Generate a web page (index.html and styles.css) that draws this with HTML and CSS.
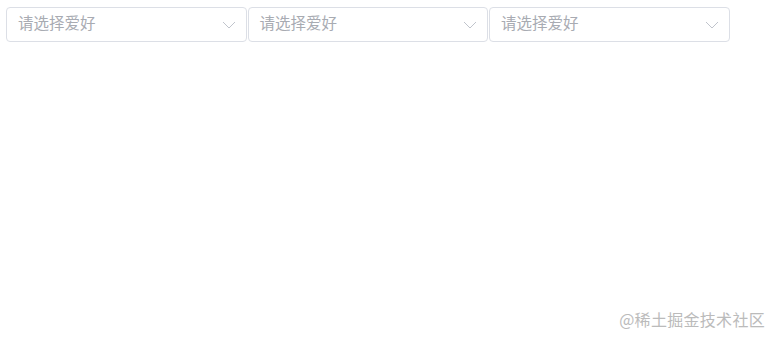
FILE: index.html
```html
<!DOCTYPE html>
<html lang="zh">
<head>
<meta charset="utf-8">
<link rel="stylesheet" href="styles.css">
</head>
<body>
<div class="page">
  <div class="row">
    <div class="select"><span class="ph">请选择爱好</span><svg class="arrow" viewBox="0 0 14 8" width="14" height="8"><path d="M1 1 L7 7 L13 1" fill="none" stroke="#c0c4cc" stroke-width="1"/></svg></div>
    <div class="select"><span class="ph">请选择爱好</span><svg class="arrow" viewBox="0 0 14 8" width="14" height="8"><path d="M1 1 L7 7 L13 1" fill="none" stroke="#c0c4cc" stroke-width="1"/></svg></div>
    <div class="select"><span class="ph">请选择爱好</span><svg class="arrow" viewBox="0 0 14 8" width="14" height="8"><path d="M1 1 L7 7 L13 1" fill="none" stroke="#c0c4cc" stroke-width="1"/></svg></div>
  </div>
  <div class="watermark">@稀土掘金技术社区</div>
</div>
</body>
</html>
```
FILE: styles.css
```css
html, body { margin: 0; padding: 0; background: #fff; }
body { font-family: "Noto Sans CJK SC", "Liberation Sans", sans-serif; width: 778px; height: 339px; overflow: hidden; }
.page { position: relative; height: 339px; padding: 7px 0 0 6px; box-sizing: border-box; }
.row { display: flex; gap: 1px; }
.select {
  width: 240.5px; height: 35px; box-sizing: border-box;
  border: 1px solid #dcdfe6; border-radius: 4px;
  display: flex; align-items: center; justify-content: space-between;
  padding: 0 10px 0 11px; background: #fff;
}
.ph { color: #a8abb2; font-size: 15.5px; line-height: 1; margin-bottom: 3px; }
.arrow { display: block; margin-top: 1px; }
.watermark {
  position: absolute; right: 13px; bottom: 9px;
  color: #bbbbbb; font-size: 16px; line-height: 22px; letter-spacing: 0.3px;
}
```
